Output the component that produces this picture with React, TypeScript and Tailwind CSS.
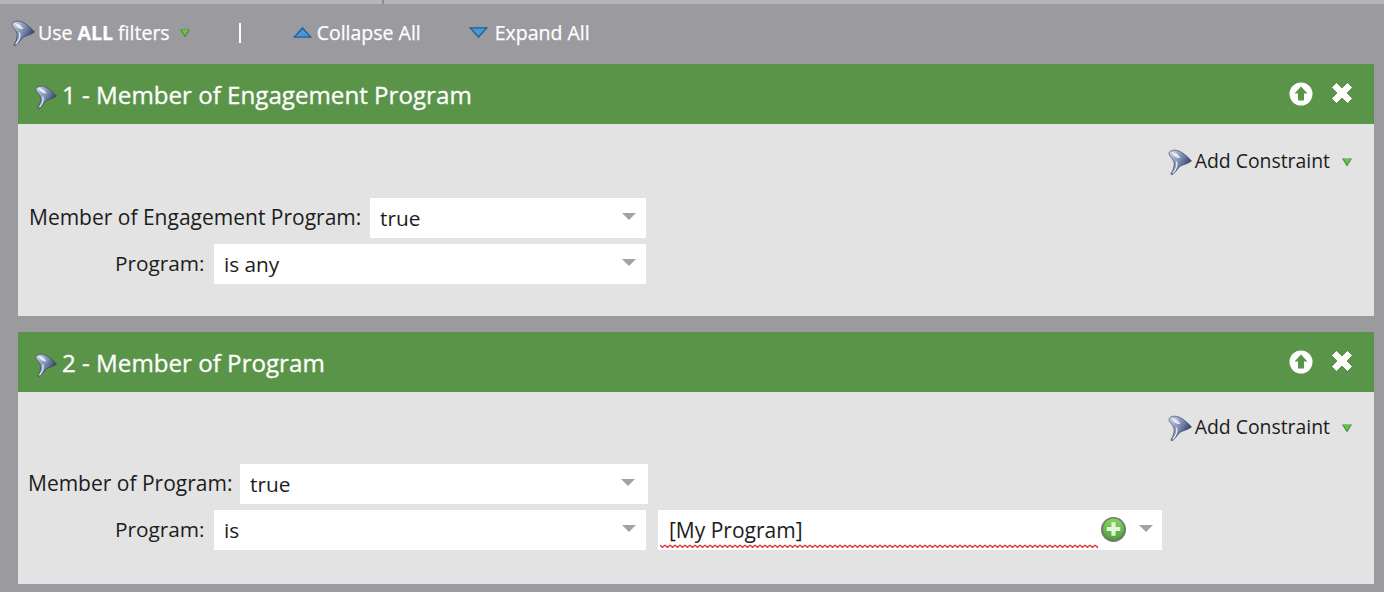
import React from "react";

const Funnel: React.FC<{ className?: string; id: string }> = ({ className, id }) => (
  <svg viewBox="0 0 24 26" className={className}>
    <defs>
      <linearGradient id={id} x1="0" y1="0" x2="1" y2="0.6">
        <stop offset="0" stopColor="#d3d9e6" />
        <stop offset="0.55" stopColor="#7a8bae" />
        <stop offset="1" stopColor="#27335a" />
      </linearGradient>
    </defs>
    <path
      d="M2 2.500C5 .5 9 1 12 2.500C16 4.500 20 8 23.500 12C20 14.500 15.500 15.500 12.500 17C10 19 8 23 4.500 25.500C3.500 26 2.500 25.500 3 24.500C5.500 21 6.500 17 6 13.500C5.500 10 1.500 7.500 1 5C1 4 1.200 3.200 2 2.500Z"
      fill={`url(#${id})`}
      stroke="#2a3557"
      strokeWidth="0.6"
    />
    <path d="M3.500 3.500C6.500 2.500 10 5 12.500 9C9 9.500 5.500 7.500 3.500 3.500Z" fill="#eef1f8" opacity="0.9" />
    <path d="M8.500 12.500C9.500 16 8 20.500 5 24" stroke="#e3e8f3" strokeWidth="1.400" fill="none" />
  </svg>
);

const GreenCaret: React.FC<{ className?: string }> = ({ className }) => (
  <svg viewBox="0 0 10 9" className={className}>
    <path d="M0 .5H10L5 8.500Z" fill="#3f8f2e" />
    <path d="M1.500 1H8.500L5 6.500Z" fill="#6cc246" />
  </svg>
);

const Select: React.FC<{ value: string; className: string }> = ({ value, className }) => (
  <div className={`h-10 bg-white flex items-center pl-[10px] ${className}`}>
    <span className="flex-1">{value}</span>
    <span className="w-0 h-0 mb-[4px] border-x-[7px] border-x-transparent border-t-[7px] border-t-[#a3a3a3]" />
  </div>
);

const PanelHeader: React.FC<{ title: string; id: string }> = ({ title, id }) => (
  <div className="h-[60px] bg-[#5a9449] flex items-center pl-[17px] pr-[20px] text-white">
    <Funnel id={id} className="w-[22px] h-[26px] mt-[5px] mr-[5px]" />
    <span className="flex-1 text-[24.150px] leading-none pt-[2px] [-webkit-text-stroke:0.3px_white]">{title}</span>
    <svg viewBox="0 0 24 24" className="w-[24px] h-[24px] mr-[17px]">
      <circle cx="12" cy="12" r="11.500" fill="#ffffff" />
      <path d="M12 4.500L18.500 11.500H15V18.500H9V11.500H5.500Z" fill="#5a9449" />
    </svg>
    <svg viewBox="0 0 24 24" className="w-[24px] h-[24px] mb-[2px]">
      <path d="M2.500 6.500L6.500 2.500L12 8L17.500 2.500L21.500 6.500L16 12L21.500 17.500L17.500 21.500L12 16L6.500 21.500L2.500 17.500L8 12Z" fill="#ffffff" stroke="#ffffff" strokeWidth="1" strokeLinejoin="round" />
    </svg>
  </div>
);

const AddConstraint: React.FC<{ id: string }> = ({ id }) => (
  <div className="flex items-center justify-end pr-[22px] text-[19.400px] text-[#1c1c1c]">
    <Funnel id={id} className="w-[24px] h-[26px] mr-[3px] mt-[2px]" />
    <span>Add Constraint</span>
    <GreenCaret className="w-[10px] h-[9px] ml-[12px] mt-[2px]" />
  </div>
);

const App: React.FC = () => {
  return (
    <div
      className="w-[1384px] h-[592px] overflow-hidden bg-[#9b9a9f] text-[20.800px] leading-[28px] text-[#1c1c1c]"
      style={{ fontFamily: '"Open Sans", sans-serif' }}
    >
      {/* top strip */}
      <div className="h-[4px] bg-[#b5b4b8] flex">
        <div className="w-[382px]" />
        <div className="w-[2px] bg-[#8d8c91]" />
      </div>

      {/* toolbar */}
      <div className="h-[60px] flex items-center pl-[11px] pb-[3px] text-white text-[19.500px] [-webkit-text-stroke:0.25px_white]">
        <Funnel id="f0" className="w-[24px] h-[26px] mr-[3px]" />
        <span>
          Use <b className="font-bold">ALL</b> filters
        </span>
        <GreenCaret className="w-[10px] h-[9px] ml-[10px] mt-[1px]" />
        <span className="ml-[49px] w-[2px] h-[20px] bg-white" />
        <svg viewBox="0 0 20 12" className="w-[19px] h-[11px] ml-[52px] mr-[5px]">
          <path d="M10 1L19 11H1Z" fill="#4b97d4" stroke="#1f5f99" strokeWidth="1.500" />
        </svg>
        <span>Collapse All</span>
        <svg viewBox="0 0 20 12" className="w-[19px] h-[11px] ml-[48px] mr-[7px]">
          <path d="M1 1H19L10 11Z" fill="#4b97d4" stroke="#1f5f99" strokeWidth="1.500" />
        </svg>
        <span>Expand All</span>
      </div>

      {/* panel 1 */}
      <div className="ml-[18px] mr-[10px] mb-[16px] h-[252px] bg-[#e3e3e3]">
        <PanelHeader title="1 - Member of Engagement Program" id="f1" />
        <div className="pt-[23px]">
          <AddConstraint id="f2" />
          <div className="flex items-center mt-[23px] pl-[11px]">
            <span className="w-[341px] shrink-0 text-[21px] pb-[3px]">Member of Engagement Program:</span>
            <Select value="true" className="w-[276px] pr-[10px]" />
          </div>
          <div className="flex items-center mt-[6px]">
            <span className="w-[196px] shrink-0 pl-[97px] pb-[3px]">Program:</span>
            <Select value="is any" className="w-[432px] pr-[10px]" />
          </div>
        </div>
      </div>

      {/* panel 2 */}
      <div className="ml-[18px] mr-[10px] h-[252px] bg-[#e3e3e3]">
        <PanelHeader title="2 - Member of Program" id="f3" />
        <div className="pt-[21px]">
          <AddConstraint id="f4" />
          <div className="flex items-center mt-[23px] pl-[10px]">
            <span className="w-[212px] shrink-0 text-[21px] pb-[3px]">Member of Program:</span>
            <Select value="true" className="w-[408px] pr-[13px]" />
          </div>
          <div className="flex items-center mt-[6px]">
            <span className="w-[196px] shrink-0 pl-[97px] pb-[3px]">Program:</span>
            <Select value="is" className="w-[432px] pr-[10px]" />
            <div className="ml-[12px] w-[504px] h-10 bg-white flex items-center pl-[11px] pr-[9px] relative">
              <span className="flex-1 text-[21px]">[My Program]</span>
              <svg viewBox="0 0 24 24" className="w-[25px] h-[25px] mr-[13px] mb-[2px]">
                <defs>
                  <linearGradient id="plusGreen" x1="0" y1="0" x2="0" y2="1">
                    <stop offset="0" stopColor="#8ad35f" />
                    <stop offset="1" stopColor="#4aa637" />
                  </linearGradient>
                </defs>
                <circle cx="12" cy="12" r="12" fill="#6d7d69" />
                <circle cx="12" cy="11.500" r="10" fill="url(#plusGreen)" />
                <path d="M10 5H14V9.500H18.500V13.500H14V18H10V13.500H5.500V9.500H10Z" fill="#e6f5dc" />
              </svg>
              <span className="w-0 h-0 mb-[4px] border-x-[7px] border-x-transparent border-t-[7px] border-t-[#a3a3a3]" />
              {/* spellcheck squiggle */}
              <svg className="absolute left-[2px] top-[34px] w-[438px] h-[4px]">
                <defs>
                  <pattern id="squiggle" width="5" height="4" patternUnits="userSpaceOnUse">
                    <path d="M0 1L2.500 3.500L5 1" stroke="#e0383e" strokeWidth="1.300" fill="none" />
                  </pattern>
                </defs>
                <rect width="438" height="4" fill="url(#squiggle)" />
              </svg>
            </div>
          </div>
        </div>
      </div>
    </div>
  );
};

export default App;
